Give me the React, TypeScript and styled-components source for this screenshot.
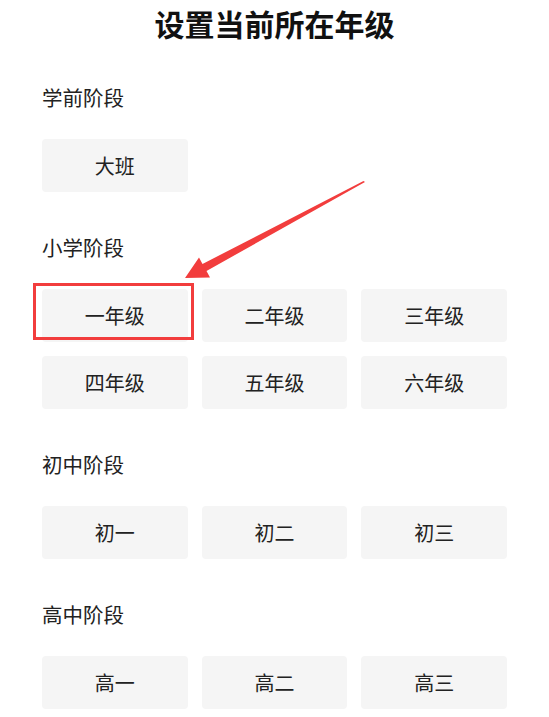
import React from 'react';
import styled, { createGlobalStyle, css } from 'styled-components';

const GlobalStyle = createGlobalStyle`
  html, body {
    margin: 0;
    padding: 0;
    background: #ffffff;
  }
  body {
    font-family: "Noto Sans CJK SC", "Noto Sans", sans-serif;
    color: #222222;
  }
`;

const Page = styled.div`
  position: relative;
  width: 549px;
  min-height: 717px;
  box-sizing: border-box;
  padding: 0 42px;
  overflow: hidden;
`;

const Title = styled.h1`
  margin: 0;
  padding-top: 3px;
  height: 41px;
  line-height: 40px;
  font-size: 30px;
  font-weight: 700;
  text-align: center;
  color: #111111;
`;

const Sections = styled.div`
  display: flex;
  flex-direction: column;
  gap: 42px;
  margin-top: 40px;
`;

const Section = styled.section`
  display: flex;
  flex-direction: column;
`;

const Label = styled.div`
  line-height: 26px;
  font-size: 20.5px;
  margin-bottom: 29px;
  color: #222222;
`;

const Grid = styled.div`
  display: grid;
  grid-template-columns: repeat(3, 1fr);
  column-gap: 14px;
  row-gap: 14px;
`;

const Grade = styled.button<{ $marked?: boolean }>`
  position: relative;
  height: 53px;
  border: none;
  border-radius: 4px;
  background: #f5f5f5;
  font-family: inherit;
  font-size: 20px;
  color: #222222;
  padding: 0;
  cursor: pointer;

  ${(p) =>
    p.$marked &&
    css`
      &::after {
        content: '';
        position: absolute;
        left: -9px;
        top: -6px;
        width: 161px;
        height: 57px;
        box-sizing: border-box;
        border: 3px solid #f23d3d;
      }
    `}
`;

const Arrow = styled.svg`
  position: absolute;
  left: 0;
  top: 0;
  pointer-events: none;
`;

const stages = [
  { name: '学前阶段', grades: ['大班'] },
  {
    name: '小学阶段',
    grades: ['一年级', '二年级', '三年级', '四年级', '五年级', '六年级'],
  },
  { name: '初中阶段', grades: ['初一', '初二', '初三'] },
  { name: '高中阶段', grades: ['高一', '高二', '高三'] },
];

export default () => {
  return (
    <Page>
      <GlobalStyle />
      <Title>设置当前所在年级</Title>
      <Sections>
        {stages.map((stage) => (
          <Section key={stage.name}>
            <Label>{stage.name}</Label>
            <Grid>
              {stage.grades.map((g) => (
                <Grade key={g} $marked={g === '一年级'}>
                  {g}
                </Grade>
              ))}
            </Grid>
          </Section>
        ))}
      </Sections>
      <Arrow width='549' height='717' viewBox='0 0 549 717'>
        <polygon
          fill='#f23d3d'
          points='185,278 210,277.5 206.5,271 365,182 363.5,181 202.5,264 199,257.5'
        />
      </Arrow>
    </Page>
  );
};
